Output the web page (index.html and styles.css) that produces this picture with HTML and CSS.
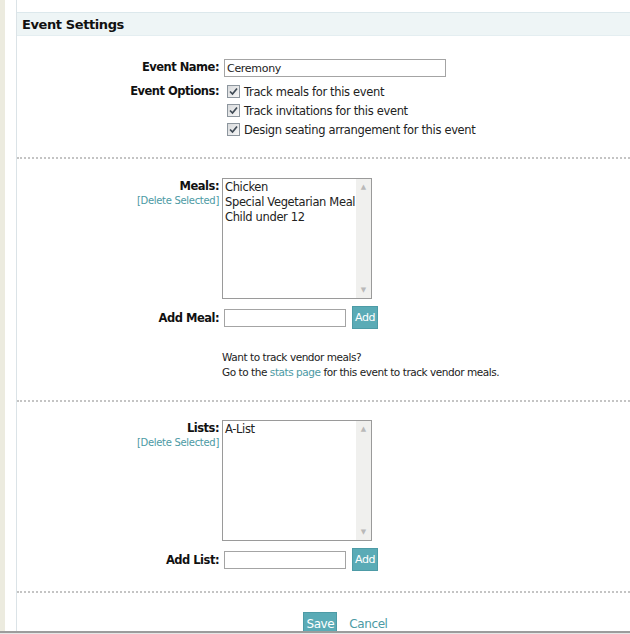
FILE: index.html
```html
<!DOCTYPE html>
<html lang="en">
<head>
  <meta charset="UTF-8" />
  <meta name="viewport" content="width=device-width, initial-scale=1.0" />
  <title>Event Settings</title>
  <link rel="stylesheet" href="styles.css">
</head>
<body>
  <div class="panel">
    <h1 class="panel-title">Event Settings</h1>

    <div class="section section-event">
      <div class="row">
        <label class="label">Event Name:</label>
        <input type="text" class="text-input name-input" value="Ceremony" />
      </div>
      <div class="row row-options">
        <span class="label">Event Options:</span>
        <div class="options">
          <div class="option"><span class="check"><svg width="9" height="9" viewBox="0 0 9 9"><path d="M1 4.5 L3.5 7 L8 1.5" fill="none" stroke="#3f4a55" stroke-width="1.7"/></svg></span>Track meals for this event</div>
          <div class="option"><span class="check"><svg width="9" height="9" viewBox="0 0 9 9"><path d="M1 4.5 L3.5 7 L8 1.5" fill="none" stroke="#3f4a55" stroke-width="1.7"/></svg></span>Track invitations for this event</div>
          <div class="option"><span class="check"><svg width="9" height="9" viewBox="0 0 9 9"><path d="M1 4.5 L3.5 7 L8 1.5" fill="none" stroke="#3f4a55" stroke-width="1.7"/></svg></span>Design seating arrangement for this event</div>
        </div>
      </div>
    </div>

    <div class="section section-meals">
      <div class="row">
        <div class="label">
          Meals:
          <a href="#" class="delete-link">[Delete Selected]</a>
        </div>
        <div class="listbox">
          <div class="list-items">
            <div>Chicken</div>
            <div>Special Vegetarian Meal</div>
            <div>Child under 12</div>
          </div>
          <div class="scrollbar"><span>&#9650;</span><span>&#9660;</span></div>
        </div>
      </div>
      <div class="row row-add">
        <label class="label">Add Meal:</label>
        <div class="add-group">
          <input type="text" class="text-input add-input" />
          <button class="btn">Add</button>
        </div>
      </div>
      <div class="row row-note">
        <span></span>
        <p class="note">Want to track vendor meals?<br>Go to the <a href="#">stats page</a> for this event to track vendor meals.</p>
      </div>
    </div>

    <div class="section section-lists">
      <div class="row">
        <div class="label">
          Lists:
          <a href="#" class="delete-link">[Delete Selected]</a>
        </div>
        <div class="listbox">
          <div class="list-items">
            <div>A-List</div>
          </div>
          <div class="scrollbar"><span>&#9650;</span><span>&#9660;</span></div>
        </div>
      </div>
      <div class="row row-add">
        <label class="label">Add List:</label>
        <div class="add-group">
          <input type="text" class="text-input add-input" />
          <button class="btn">Add</button>
        </div>
      </div>
    </div>

    <div class="actions">
      <button class="btn btn-save">Save</button>
      <a href="#" class="cancel">Cancel</a>
    </div>
  </div>
  <div class="frame-bottom"></div>
</body>
</html>
```

FILE: styles.css
```css
body {
  margin: 0;
  padding-left: 16px;
  font-family: "DejaVu Sans", Tahoma, sans-serif;
  font-size: 11px;
  color: #222;
  background: linear-gradient(to right, #ecebdf 5px, #fff 5px);
  min-height: 634px;
  box-sizing: border-box;
}
.panel {
  border-left: 1px solid #dbe3e7;
  min-height: 634px;
  background: #fff;
  padding-top: 12px;
  box-sizing: border-box;
}
.panel-title {
  margin: 0;
  height: 22px;
  line-height: 23px;
  padding-left: 5px;
  font-size: 13px;
  font-weight: bold;
  letter-spacing: -0.4px;
  color: #111;
  background: #eef5f6;
  border-top: 1px solid #dce8ec;
  border-bottom: 1px solid #e4eef1;
}
.section {
  border-bottom: 2px dotted #c4c4c4;
}
.section-event {
  padding: 23px 0 18px;
}
.section-meals {
  padding: 19px 0 20px;
}
.section-lists {
  padding: 18px 0 20px;
}
.row {
  display: grid;
  grid-template-columns: 202px 1fr;
  column-gap: 5px;
  align-items: start;
}
.label {
  text-align: right;
  font-weight: bold;
  font-size: 11.5px;
  letter-spacing: -0.5px;
  line-height: 16px;
  color: #111;
}
.row-add .label {
  line-height: 18px;
}
.delete-link {
  display: block;
  font-weight: normal;
  font-size: 10px;
  letter-spacing: -0.3px;
  line-height: 14px;
  color: #4c9aa4;
  text-decoration: none;
}
.text-input {
  height: 18px;
  box-sizing: border-box;
  border: 1px solid #a4a4a4;
  padding: 0 2px;
  font-family: inherit;
  font-size: 11px;
  letter-spacing: -0.3px;
  color: #222;
  margin: 0;
}
.name-input {
  width: 222px;
}
.row-options {
  margin-top: 5px;
}
.row-options .label {
  line-height: 18px;
}
.options {
  display: flex;
  flex-direction: column;
}
.option {
  display: flex;
  align-items: center;
  gap: 4px;
  height: 19px;
  padding-left: 3px;
  font-size: 11.5px;
  letter-spacing: -0.33px;
}
.check {
  width: 11px;
  height: 11px;
  border: 1px solid #8d969e;
  background: linear-gradient(135deg, #d8dadc, #f6f6f6);
  display: flex;
  align-items: center;
  justify-content: center;
}
.listbox {
  display: flex;
  width: 150px;
  height: 121px;
  margin-left: -2px;
  box-sizing: border-box;
  border: 1px solid #9a9a9a;
}
.list-items {
  flex: 1;
  padding: 1px 2px;
  font-size: 11.5px;
  letter-spacing: -0.35px;
  line-height: 15px;
  white-space: nowrap;
  overflow: hidden;
}
.scrollbar {
  width: 15px;
  background: #f0f0ee;
  display: flex;
  flex-direction: column;
  justify-content: space-between;
  align-items: center;
  font-size: 7px;
  color: #b9b9b9;
  padding: 4px 0;
}
.row-add {
  margin-top: 7px;
  align-items: center;
}
.add-group {
  display: flex;
  align-items: center;
  gap: 6px;
}
.add-input {
  width: 122px;
}
.btn {
  background: #5aabb6;
  color: #fff;
  border: 1px solid #4d9ba6;
  font-family: inherit;
  font-size: 11px;
  letter-spacing: -0.4px;
  height: 23px;
  padding: 0 2px;
  margin: 0;
  cursor: pointer;
}
.row-note {
  margin-top: 21px;
}
.note {
  margin: 0 0 0 -2px;
  font-size: 10.5px;
  letter-spacing: -0.45px;
  line-height: 15px;
  color: #222;
}
.note a {
  color: #4c9aa4;
  text-decoration: none;
}
.actions {
  display: flex;
  align-items: center;
  justify-content: center;
  gap: 12px;
  padding-top: 19px;
  padding-left: 44px;
}
.btn-save {
  font-size: 12px;
  padding: 0 2px;
}
.cancel {
  color: #4c9aa4;
  font-size: 12px;
  letter-spacing: -0.4px;
  text-decoration: none;
}
.frame-bottom {
  position: fixed;
  left: 0;
  right: 0;
  bottom: 0;
  height: 1px;
  border-top: 2px solid #9c9c9c;
  background: #e6e6e6;
}
```
